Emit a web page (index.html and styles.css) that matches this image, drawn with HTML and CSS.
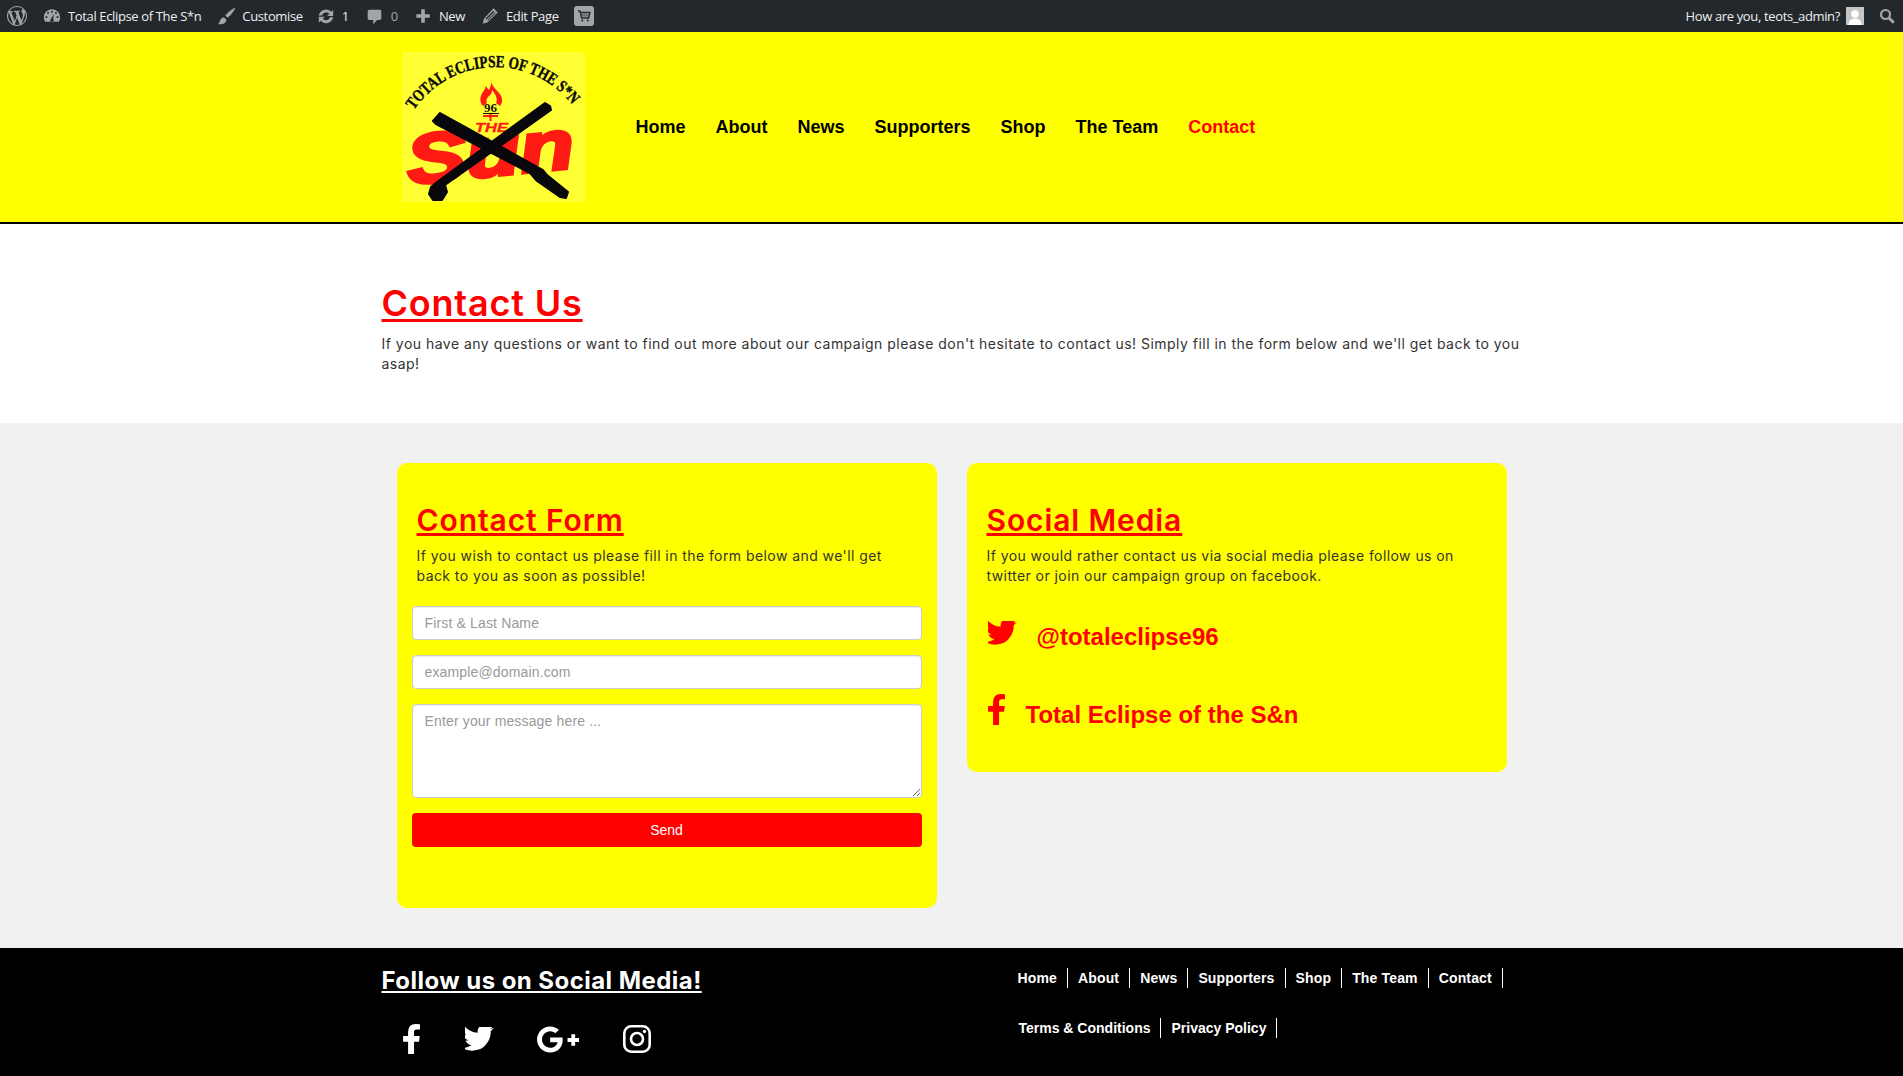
FILE: index.html
```html
<!DOCTYPE html>
<html lang="en">
<head>
<meta charset="utf-8">
<title>Contact Us</title>
<link rel="stylesheet" href="styles.css">
</head>
<body>
<div class="adminbar">
  <div class="ab-group">
    <svg class="ab-wp" viewBox="0 0 20 20"><path d="M20 10c0-5.51-4.49-10-10-10C4.48 0 0 4.49 0 10c0 5.52 4.48 10 10 10 5.51 0 10-4.48 10-10zM7.78 15.37L4.37 6.22c.55-.02 1.17-.08 1.17-.08.5-.06.44-1.13-.06-1.11 0 0-1.45.11-2.37.11-.18 0-.37 0-.58-.01C4.12 2.69 6.87 1.11 10 1.11c2.33 0 4.45.87 6.05 2.34-.68-.11-1.65.39-1.65 1.58 0 .74.45 1.36.9 2.1.35.61.55 1.36.55 2.46 0 1.49-1.4 5-1.4 5l-3.03-8.37c.54-.02.82-.17.82-.17.5-.05.44-1.25-.06-1.22 0 0-1.44.12-2.38.12-.87 0-2.33-.12-2.33-.12-.5-.03-.56 1.2-.06 1.22l.92.08 1.26 3.41zM17.41 10c.24-.64.74-1.87.43-4.25.7 1.29 1.05 2.71 1.05 4.25 0 3.29-1.73 6.24-4.4 7.78.97-2.59 1.94-5.2 2.92-7.78zM6.1 18.09C3.12 16.65 1.11 13.53 1.11 10c0-1.3.23-2.48.72-3.59C3.25 10.3 4.67 14.2 6.1 18.09zm4.03-6.63l2.58 6.98c-.86.29-1.76.45-2.71.45-.79 0-1.57-.11-2.29-.33.81-2.38 1.62-4.74 2.42-7.1z"/></svg>
    <span class="ab-item ab-site"><svg class="ab-ico" viewBox="0 0 20 20"><path d="M10 2.500C4.800 2.500 1 6.600 1 11.600c0 1.900.6 3.600 1.500 4.900h15c.9-1.300 1.500-3 1.500-4.900C19 6.600 15.200 2.500 10 2.500zM10 4.200a1.100 1.100 0 1 1 0 2.200 1.100 1.100 0 0 1 0-2.200zM5.600 5.600a1.100 1.100 0 1 1 0 2.200 1.100 1.100 0 0 1 0-2.200zM14.400 5.600a1.100 1.100 0 1 1 0 2.200 1.100 1.100 0 0 1 0-2.200zM3.800 10a1.100 1.100 0 1 1 0 2.200 1.100 1.100 0 0 1 0-2.200zM16.200 10a1.100 1.100 0 1 1 0 2.200 1.100 1.100 0 0 1 0-2.200zM12.200 7.400l-1 6a1.900 1.900 0 1 1-2.400 0z" fill-rule="evenodd"/></svg>Total Eclipse of The S*n</span>
    <span class="ab-item ab-cust"><svg class="ab-ico ab-ico-brush" viewBox="0 0 20 20"><path d="M19.500.5c-2.600 1-7.500 4.400-10.800 8.500l2.600 2.400C15.300 8 18.500 3.200 19.500.5zM7.300 10.700c-2.300.3-3.500 1.700-4 3.600-.4 1.500-1 2.700-2.300 3.700 2.800.6 6.800-.1 8.300-2.600.6-1 .6-1.700.4-2.300z"/></svg>Customise</span>
    <span class="ab-item ab-upd"><svg class="ab-ico" viewBox="0 0 20 20"><path d="M10.200 2.800c2.200 0 4.200 1 5.500 2.600L18 3.200V10h-6.800l2.400-2.300c-.9-1-2.100-1.500-3.400-1.500-2.200 0-4 1.400-4.600 3.300H1.900c.7-3.600 4.200-6.700 8.300-6.700zM2 10.800h6.800l-2.400 2.300c.9 1 2.100 1.500 3.400 1.500 2.200 0 4-1.400 4.600-3.300h3.700c-.7 3.600-4.200 6.700-8.300 6.700-2.200 0-4.200-1-5.500-2.600L2 17.600z"/></svg>1</span>
    <span class="ab-item ab-com"><svg class="ab-ico ab-ico-com" viewBox="0 0 20 20"><path d="M4 2h12c1.100 0 2 .9 2 2v8c0 1.100-.9 2-2 2h-3l-4.500 5v-5H4c-1.100 0-2-.9-2-2V4c0-1.100.9-2 2-2z"/></svg><span class="ab-zero">0</span></span>
    <span class="ab-item ab-new"><svg class="ab-ico" viewBox="0 0 20 20"><path d="M8 2.500h4V8h5.500v4H12v5.500H8V12H2.500V8H8z"/></svg>New</span>
    <span class="ab-item ab-edit"><svg class="ab-ico" viewBox="0 0 20 20"><path d="M14 1.500l4.500 4.500L7.500 17 2 18.500 3.200 13zM13.800 4.200L5.200 12.800l1 1 8.600-8.600zM15.600 6l-8.600 8.600.9.600 8.300-8.400z" fill-rule="evenodd"/></svg>Edit Page</span>
    <svg class="ab-cart" viewBox="0 0 20 20"><rect x="0" y="0" width="20" height="20" rx="3"/><path d="M4 5h2l1.600 7h7l1.400-5.500H6.400" fill="none" stroke="#23282d" stroke-width="1.300"/><path d="M8 7.800v2.800M10 7.800v2.800M12 7.800v2.800M14 7.800v2.800" stroke="#23282d" stroke-width=".8"/><circle cx="8.300" cy="14.600" r="1" fill="#23282d"/><circle cx="13.800" cy="14.600" r="1" fill="#23282d"/></svg>
  </div>
  <div class="ab-group">
    <span class="ab-howdy">How are you, teots_admin?</span>
    <svg class="ab-avatar" viewBox="0 0 18 18"><rect width="18" height="18" fill="#c6c6c6"/><circle cx="9" cy="7" r="3.800" fill="#fff"/><path d="M2.500 18c.3-5 3-6.500 6.500-6.500s6.200 1.500 6.500 6.500z" fill="#fff"/></svg>
    <svg class="ab-search" viewBox="0 0 16 16"><circle cx="6.500" cy="6.500" r="4.500" fill="none" stroke="#a0a5aa" stroke-width="2.200"/><path d="M10 10l4.800 4.800" stroke="#a0a5aa" stroke-width="3"/></svg>
  </div>
</div>

<header class="site-header">
  <div class="container header-row">
    <svg class="logo" viewBox="0 0 183 150">
      <rect width="183" height="150" fill="#ffff33"/>
      <path id="arc" d="M12 58 A98 98 0 0 1 174 58" fill="none"/>
      <text class="logo-arc"><textPath href="#arc" textLength="184" lengthAdjust="spacingAndGlyphs">TOTAL ECLIPSE OF THE S*N</textPath></text>
      <path d="M90 26C88 33 93 36 97 41C101 46 101 50 98 54L94 51C96 47 94 43 90 38C90 42 88 43 86 45C84 48 84 49 85 51L81 54C77 50 78 44 81 40C82 38 83 37 84 34C85 36 86 37 87 38C89 34 90 30 90 26Z" fill="#ff1a14"/>
      <text class="logo-96" x="88.500" y="60">96</text>
      <path d="M81 61.500h16" stroke="#111" stroke-width="1"/>
      <path d="M88.500 62v7M81 64h15" stroke="#ff1a14" stroke-width="2"/>
      <text class="logo-the" x="73" y="80" textLength="33" lengthAdjust="spacingAndGlyphs">THE</text>
      <g transform="rotate(-6 90 110)">
        <text class="logo-sun" x="5" y="124" textLength="168" lengthAdjust="spacingAndGlyphs">Sun</text>
      </g>
      <polygon class="logo-stick" points="38,61 31,69 34,72 128,121 135,129 158,145 164,146 166,140 145,123 141,118"/>
      <polygon class="logo-stick" points="143,51 148,54 149,58 43,133 45,140 40,148 31,148 27,142 29,135 35,130"/>
    </svg>
    <nav class="main-nav">
      <a>Home</a><a>About</a><a>News</a><a>Supporters</a><a>Shop</a><a>The Team</a><a class="active">Contact</a>
    </nav>
  </div>
</header>

<section class="intro">
  <div class="container">
    <h1 class="h-main">Contact Us</h1>
    <p class="copy">If you have any questions or want to find out more about our campaign please don't hesitate to contact us! Simply fill in the form below and we'll get back to you asap!</p>
  </div>
</section>

<section class="cards">
  <div class="container cards-grid">
    <div class="card card-form">
      <h2 class="h-card">Contact Form</h2>
      <p class="copy card-copy">If you wish to contact us please fill in the form below and we'll get back to you as soon as possible!</p>
      <form class="form">
        <input class="field" type="text" placeholder="First &amp; Last Name">
        <input class="field" type="text" placeholder="example@domain.com">
        <textarea class="field field-area" placeholder="Enter your message here ..."></textarea>
        <button class="send" type="button">Send</button>
      </form>
    </div>
    <div class="card card-social">
      <h2 class="h-card">Social Media</h2>
      <p class="copy card-copy">If you would rather contact us via social media please follow us on twitter or join our campaign group on facebook.</p>
      <div class="social-row row-tw">
        <svg class="soc-tw" viewBox="192 380 1428 1160"><path d="M1620 408q-67 98-162 167 1 14 1 42 0 130-38 259.500t-115.500 248.500-184.500 210.500-258 146-323 54.500q-271 0-496-145 35 4 78 4 225 0 401-138-105-2-188-64.500t-114-159.500q33 5 61 5 43 0 85-11-112-23-185.500-111.500t-73.500-205.500v-4q68 38 146 41-66-44-105-115t-39-154q0-88 44-163 121 149 294.500 238.500t371.500 99.500q-8-38-8-74 0-134 94.500-228.500t228.500-94.500q140 0 236 102 109-21 205-78-37 115-142 178 92-10 184-50z"/></svg>
        <a class="soc-link">@totaleclipse96</a>
      </div>
      <div class="social-row row-fb">
        <svg class="soc-fb" viewBox="476 0 867 1536"><path d="M1343 12v264h-157q-86 0-116 36t-30 108v189h293l-39 296h-254v759h-306v-759h-255v-296h255v-218q0-186 104-288.500t277-102.500q147 0 228 12z"/></svg>
        <a class="soc-link">Total Eclipse of the S&amp;n</a>
      </div>
    </div>
  </div>
</section>

<footer class="footer">
  <div class="container footer-row">
    <div class="footer-left">
      <h3 class="h-foot">Follow us on Social Media!</h3>
      <div class="foot-icons">
        <svg class="fi-fb" viewBox="476 0 867 1536"><path d="M1343 12v264h-157q-86 0-116 36t-30 108v189h293l-39 296h-254v759h-306v-759h-255v-296h255v-218q0-186 104-288.500t277-102.500q147 0 228 12z"/></svg>
        <svg class="fi-tw" viewBox="192 380 1428 1160"><path d="M1620 408q-67 98-162 167 1 14 1 42 0 130-38 259.500t-115.500 248.500-184.500 210.500-258 146-323 54.500q-271 0-496-145 35 4 78 4 225 0 401-138-105-2-188-64.500t-114-159.500q33 5 61 5 43 0 85-11-112-23-185.500-111.500t-73.500-205.500v-4q68 38 146 41-66-44-105-115t-39-154q0-88 44-163 121 149 294.500 238.500t371.500 99.500q-8-38-8-74 0-134 94.500-228.500t228.500-94.500q140 0 236 102 109-21 205-78-37 115-142 178 92-10 184-50z"/></svg>
        <svg class="fi-gp" viewBox="12 64 616 384"><path d="M386.061 228.496c1.834 9.692 3.143 19.384 3.143 31.956C389.204 370.205 315.599 448 204.800 448c-106.084 0-192-85.915-192-192s85.916-192 192-192c51.864 0 95.083 18.859 128.611 50.292l-52.126 50.030c-14.145-13.621-39.028-29.599-76.485-29.599-65.484 0-118.920 54.221-118.920 121.277 0 67.056 53.436 121.277 118.920 121.277 75.961 0 104.513-54.745 108.965-82.773H204.800v-66.009h181.261zm185.406 6.437V179.200h-56.001v55.733h-55.733v56.001h55.733v55.733h56.001v-55.733H627.200v-56.001h-55.733z"/></svg>
        <svg class="fi-ig" viewBox="0 0 28 28"><rect x="1.300" y="1.300" width="25.400" height="25.400" rx="7" fill="none" stroke="#fff" stroke-width="2.600"/><circle cx="14" cy="14" r="6" fill="none" stroke="#fff" stroke-width="2.600"/><circle cx="21.500" cy="6.500" r="1.700" fill="#fff"/></svg>
      </div>
    </div>
    <div class="footer-right">
      <ul class="foot-nav foot-nav-main"><li>Home</li><li>About</li><li>News</li><li>Supporters</li><li>Shop</li><li>The Team</li><li>Contact</li></ul>
      <ul class="foot-nav foot-nav-legal"><li>Terms &amp; Conditions</li><li>Privacy Policy</li></ul>
    </div>
  </div>
</footer>
</body>
</html>
```
FILE: styles.css
```css
* { box-sizing: border-box; }
html, body { margin: 0; padding: 0; }
body { background: #f1f1f1; font-family: "Liberation Sans", Arial, sans-serif; color: #333; height: 1076px; overflow: hidden; }
.container { width: 1170px; margin: 0 auto; padding: 0 15px; }

.adminbar { height: 32px; background: #23282d; color: #eee; display: flex; justify-content: space-between; align-items: center; font: 13px/32px "Open Sans", sans-serif; letter-spacing: -.36px; }
.ab-group { display: flex; align-items: center; }
.ab-wp { width: 20px; height: 20px; margin-left: 7px; fill: #a0a5aa; }
.ab-ico { width: 18px; height: 18px; fill: #a0a5aa; margin-right: 7px; flex: none; }
.ab-ico-brush { width: 19px; height: 19px; margin-right: 6px; }
.ab-ico-com { width: 17px; height: 17px; margin-right: 8px; }
.ab-item { display: flex; align-items: center; white-space: nowrap; }
.ab-site { margin-left: 16px; }
.ab-cust { margin-left: 16px; }
.ab-upd { margin-left: 14px; }
.ab-com { margin-left: 17px; }
.ab-zero { color: #a0a5aa; }
.ab-new { margin-left: 16px; }
.ab-edit { margin-left: 16px; }
.ab-cart { width: 20px; height: 20px; margin-left: 15px; fill: #a0a5aa; }
.ab-howdy { white-space: nowrap; }
.ab-avatar { width: 18px; height: 18px; margin-left: 6px; }
.ab-search { width: 16px; height: 16px; margin: 0 8px 0 15px; }

.site-header { height: 192px; background: #ff0; border-bottom: 2px solid #000; }
.header-row { display: flex; align-items: center; height: 190px; }
.logo { width: 183px; height: 150px; margin-left: 20px; flex: none; }
.logo-arc { font: bold 17px "Liberation Serif", serif; fill: #0a0a0a; stroke: #0a0a0a; stroke-width: .4px; }
.logo-96 { font: bold 13px "Liberation Serif", serif; fill: #111; text-anchor: middle; }
.logo-the { font: italic bold 12.500px "Liberation Sans", sans-serif; fill: #ff1a14; stroke: #ff1a14; stroke-width: .3px; }
.logo-sun { font: italic bold 70px "Liberation Sans", sans-serif; fill: #ff1a14; stroke: #ff1a14; stroke-width: 3.500px; }
.logo-stick { fill: #08080c; stroke: #08080c; stroke-width: 2px; stroke-linejoin: round; }
.main-nav { display: flex; gap: 30px; margin-left: 51px; font-weight: bold; font-size: 18px; line-height: 22px; }
.main-nav a { color: #000; }
.main-nav .active { color: #f00; }

.intro { height: 199px; background: #fff; padding-top: 57px; }
.h-main { margin: 0; font: 600 36px/44px Inter, sans-serif; letter-spacing: .8px; color: #f00; text-decoration: underline; text-decoration-thickness: 3px; text-underline-offset: 3px; }
.copy { margin: 0; font: 14px/20px Inter, sans-serif; letter-spacing: .43px; color: #333; }
.intro .copy { margin-top: 9px; letter-spacing: .48px; }

.cards { height: 525px; padding-top: 40px; background: #f1f1f1; }
.cards-grid { display: grid; grid-template-columns: 540px 540px; gap: 30px; align-items: start; justify-content: center; }
.card { background: #ff0; border-radius: 10px; padding: 0 15px; }
.card-form { height: 445px; }
.card-social { height: 309px; }
.h-card { margin: 0; padding: 37px 5px 0; font: 600 30px/40px Inter, sans-serif; letter-spacing: .9px; color: #f00; text-decoration: underline; text-decoration-thickness: 3px; text-underline-offset: 2px; }
.card-copy { padding: 6px 5px 0; }
.form { margin-top: 20px; display: flex; flex-direction: column; gap: 15px; }
.field { display: block; width: 510px; height: 34px; border: 1px solid #ccc; border-radius: 4px; padding: 6px 12px; font: 14px/20px "Liberation Sans", sans-serif; letter-spacing: .15px; background: #fff; color: #555; box-shadow: inset 0 1px 1px rgba(0,0,0,.075); }
.field::placeholder { color: #999; opacity: 1; }
.field-area { height: 94px; }
.send { height: 34px; width: 510px; border: 0; border-radius: 4px; background: #f00; color: #fff; font: 14px "Liberation Sans", sans-serif; }
.social-row { display: flex; padding-left: 6px; }
.row-tw { margin-top: 35px; align-items: flex-start; height: 40px; }
.row-fb { margin-top: 32px; align-items: flex-start; }
.soc-tw { width: 29px; height: 24px; fill: #f00; }
.soc-fb { width: 17px; height: 32px; fill: #f00; }
.soc-link { color: #f00; font-weight: bold; font-size: 24px; line-height: 28px; }
.row-tw .soc-link { margin-left: 20px; margin-top: 2px; }
.row-fb .soc-link { margin-left: 21px; margin-top: 8px; }

.footer { height: 128px; background: #000; color: #fff; }
.footer-row { display: flex; justify-content: space-between; }
.h-foot { margin: 0; padding-top: 17px; font: 700 24px/32px Inter, sans-serif; letter-spacing: .45px; color: #fff; text-decoration: underline; text-decoration-thickness: 2px; text-underline-offset: 2px; }
.foot-icons { display: flex; align-items: center; margin-top: 27px; padding-left: 21px; }
.fi-fb { width: 17px; height: 30px; fill: #fff; }
.fi-tw { width: 29px; height: 24px; fill: #fff; margin-left: 45px; }
.fi-gp { width: 42px; height: 27px; fill: #fff; margin-left: 43px; }
.fi-ig { width: 28px; height: 28px; margin-left: 44px; }
.footer-right { padding-top: 20px; width: 514px; }
.foot-nav { list-style: none; margin: 0 0 30px; padding: 0; display: flex; font-weight: bold; font-size: 14px; line-height: 20px; }
.foot-nav-main { letter-spacing: .15px; }
.foot-nav-legal { margin-left: 1px; }
.foot-nav li { padding: 0 10px; border-right: 1px solid #fff; white-space: nowrap; }
```
